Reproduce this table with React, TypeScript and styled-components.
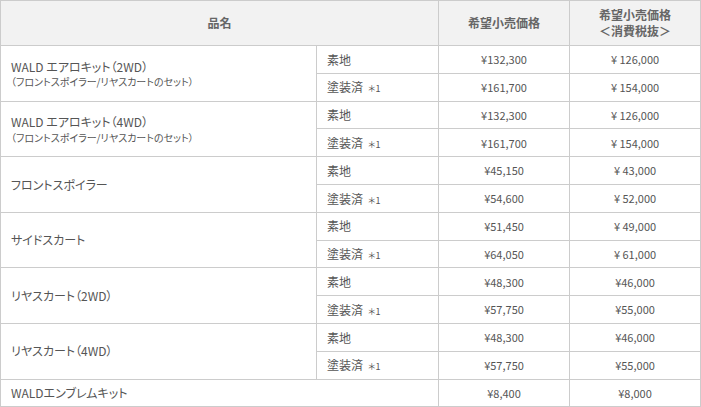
import React from 'react';
import styled, { createGlobalStyle } from 'styled-components';

interface Variant {
  kind: string;
  note?: string;
  price: string;
  net: string;
}

interface Item {
  name: string;
  sub?: string;
  variants: Array<Variant>;
}

const GlobalStyles = createGlobalStyle`
  body {
    margin: 0;
    background: #fff;
    font-family: 'Noto Sans CJK JP', 'Noto Sans', sans-serif;
    color: #555;
  }
`;

const Table = styled.table`
  width: 701px;
  border-collapse: collapse;
  table-layout: fixed;
  font-size: 12px;
  line-height: 1.3;
  font-feature-settings: 'palt';
`;

const HeadCell = styled.th`
  background: #f2f2f2;
  border: 1px solid #ccc;
  height: 44px;
  padding: 0;
  font-size: 12px;
  font-weight: bold;
  color: #666;
  text-align: center;
  vertical-align: middle;
`;

const NameCell = styled.td`
  border: 1px solid #ccc;
  padding: 0 10px;
  vertical-align: middle;
  text-align: left;
`;

const SubName = styled.span`
  display: block;
  font-size: 10px;
  margin-top: 1px;
`;

const KindCell = styled.td`
  border: 1px solid #ccc;
  height: 26.8px;
  padding: 0 10px;
  vertical-align: middle;
`;

const Note = styled.span`
  font-size: 9px;
  margin-left: 5px;
`;

const PriceCell = styled.td`
  border: 1px solid #ccc;
  height: 26.8px;
  padding: 0;
  font-size: 11px;
  text-align: center;
  vertical-align: middle;
`;

const aero = (price: [string, string, string, string]): Array<Variant> => [
  { kind: '素地', price: price[0], net: price[1] },
  { kind: '塗装済', note: '＊1', price: price[2], net: price[3] },
];

const items: Array<Item> = [
  {
    name: 'WALD エアロキット（2WD）',
    sub: '（フロントスポイラー/リヤスカートのセット）',
    variants: aero(['¥132,300', '¥ 126,000', '¥161,700', '¥ 154,000']),
  },
  {
    name: 'WALD エアロキット（4WD）',
    sub: '（フロントスポイラー/リヤスカートのセット）',
    variants: aero(['¥132,300', '¥ 126,000', '¥161,700', '¥ 154,000']),
  },
  {
    name: 'フロントスポイラー',
    variants: aero(['¥45,150', '¥ 43,000', '¥54,600', '¥ 52,000']),
  },
  {
    name: 'サイドスカート',
    variants: aero(['¥51,450', '¥ 49,000', '¥64,050', '¥ 61,000']),
  },
  {
    name: 'リヤスカート（2WD）',
    variants: aero(['¥48,300', '¥46,000', '¥57,750', '¥55,000']),
  },
  {
    name: 'リヤスカート（4WD）',
    variants: aero(['¥48,300', '¥46,000', '¥57,750', '¥55,000']),
  },
];

const App = () => {
  return (
    <>
      <GlobalStyles />
      <Table>
        <colgroup>
          <col style={{ width: 316 }} />
          <col style={{ width: 122 }} />
          <col style={{ width: 131 }} />
          <col style={{ width: 131 }} />
        </colgroup>
        <thead>
          <tr>
            <HeadCell colSpan={2}>品名</HeadCell>
            <HeadCell>希望小売価格</HeadCell>
            <HeadCell>
              希望小売価格
              <br />
              ＜消費税抜＞
            </HeadCell>
          </tr>
        </thead>
        <tbody>
          {items.map((item) =>
            item.variants.map((v, i) => (
              <tr key={item.name + v.kind}>
                {i === 0 && (
                  <NameCell rowSpan={item.variants.length}>
                    {item.name}
                    {item.sub && <SubName>{item.sub}</SubName>}
                  </NameCell>
                )}
                <KindCell>
                  {v.kind}
                  {v.note && <Note>{v.note}</Note>}
                </KindCell>
                <PriceCell>{v.price}</PriceCell>
                <PriceCell>{v.net}</PriceCell>
              </tr>
            ))
          )}
          <tr>
            <KindCell colSpan={2}>WALDエンブレムキット</KindCell>
            <PriceCell>¥8,400</PriceCell>
            <PriceCell>¥8,000</PriceCell>
          </tr>
        </tbody>
      </Table>
    </>
  );
};

export default App;
